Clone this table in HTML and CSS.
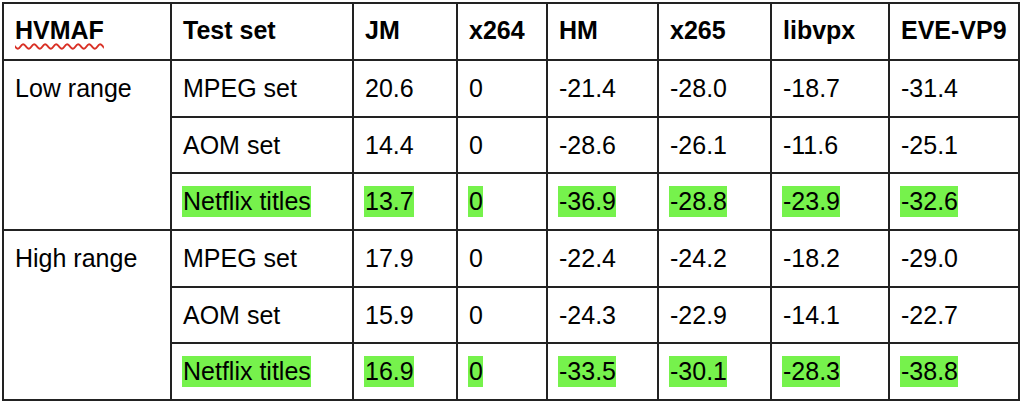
FILE: index.html
```html
<!DOCTYPE html>
<html lang="en">
<head>
<meta charset="utf-8">
<title>HVMAF table</title>
<link rel="stylesheet" href="styles.css">
</head>
<body>
<table class="results">
  <tr class="row-a">
    <th class="c1"><span class="spell">HVMAF</span></th>
    <th class="c2">Test set</th>
    <th class="c3">JM</th>
    <th class="c4">x264</th>
    <th class="c5">HM</th>
    <th class="c6">x265</th>
    <th class="c7">libvpx</th>
    <th class="c8">EVE-VP9</th>
  </tr>
  <tr class="row-a">
    <td rowspan="3">Low range</td>
    <td>MPEG set</td><td>20.6</td><td>0</td><td>-21.4</td><td>-28.0</td><td>-18.7</td><td>-31.4</td>
  </tr>
  <tr class="row-b">
    <td>AOM set</td><td>14.4</td><td>0</td><td>-28.6</td><td>-26.1</td><td>-11.6</td><td>-25.1</td>
  </tr>
  <tr class="row-a">
    <td><span class="hl">Netflix titles</span></td><td><span class="hl">13.7</span></td><td><span class="hl">0</span></td><td><span class="hl">-36.9</span></td><td><span class="hl">-28.8</span></td><td><span class="hl">-23.9</span></td><td><span class="hl">-32.6</span></td>
  </tr>
  <tr class="row-a">
    <td rowspan="3">High range</td>
    <td>MPEG set</td><td>17.9</td><td>0</td><td>-22.4</td><td>-24.2</td><td>-18.2</td><td>-29.0</td>
  </tr>
  <tr class="row-b">
    <td>AOM set</td><td>15.9</td><td>0</td><td>-24.3</td><td>-22.9</td><td>-14.1</td><td>-22.7</td>
  </tr>
  <tr class="row-a">
    <td><span class="hl">Netflix titles</span></td><td><span class="hl">16.9</span></td><td><span class="hl">0</span></td><td><span class="hl">-33.5</span></td><td><span class="hl">-30.1</span></td><td><span class="hl">-28.3</span></td><td><span class="hl">-38.8</span></td>
  </tr>
</table>
</body>
</html>
```
FILE: styles.css
```css
html, body {
  margin: 0;
  padding: 0;
  background: #fff;
}

body {
  padding: 2px 0 0 2px;
  font-family: "Liberation Sans", Arial, sans-serif;
  color: #000;
}

.results {
  border-collapse: separate;
  border-spacing: 0;
  table-layout: fixed;
  width: 1018px;
  border-top: 2px solid #222;
  border-left: 2px solid #222;
}

.results th,
.results td {
  box-sizing: border-box;
  border-right: 2px solid #222;
  border-bottom: 2px solid #222;
  padding: 12px 0 0 11px;
  vertical-align: top;
  text-align: left;
  font-size: 25px;
  line-height: 31px;
  white-space: nowrap;
}

.results th {
  font-weight: bold;
  padding-top: 11px;
}

.row-a > th,
.row-a > td { height: 57px; }
.row-b > td { height: 56px; }

.c1 { width: 168px; }
.c2 { width: 182px; }
.c3 { width: 104px; }
.c4 { width: 90px; }
.c5 { width: 111px; }
.c6 { width: 113px; }
.c7 { width: 118px; }
.c8 { width: 130px; }

.spell {
  text-decoration: underline wavy #d93025;
  text-decoration-thickness: 1.5px;
  text-underline-offset: 4px;
}

.hl {
  display: inline-block;
  background: #76f24c;
  padding-left: 1px;
  margin-left: -1px;
}
```
